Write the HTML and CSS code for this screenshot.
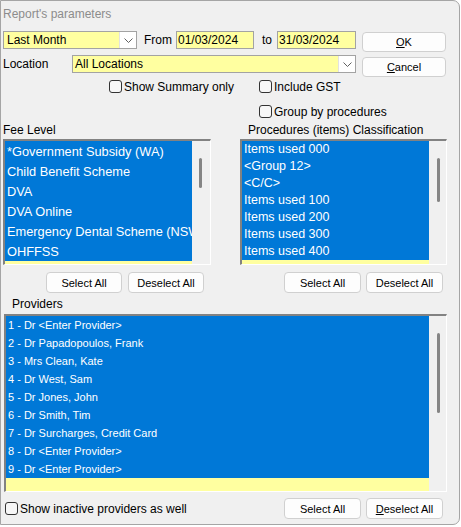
FILE: index.html
```html
<!DOCTYPE html>
<html>
<head>
<meta charset="utf-8">
<title>Report's parameters</title>
<link rel="stylesheet" href="styles.css">
</head>
<body>
<div class="window">
  <div class="title">Report's parameters</div>

  <div class="top">
    <div class="top-fields">
      <div class="field-row">
        <div class="combo combo-period">
          <span class="combo-text">Last Month</span>
          <span class="combo-btn"><svg width="9" height="5" viewBox="0 0 9 5"><polyline points="0.5,0.5 4.5,4.5 8.5,0.5" fill="none" stroke="#606060" stroke-width="1"/></svg></span>
        </div>
        <span class="lbl lbl-from">From</span>
        <div class="input date">01/03/2024</div>
        <span class="lbl lbl-to">to</span>
        <div class="input date date2">31/03/2024</div>
      </div>
      <div class="field-row">
        <span class="lbl lbl-loc">Location</span>
        <div class="combo combo-loc">
          <span class="combo-text">All Locations</span>
          <span class="combo-btn"><svg width="9" height="5" viewBox="0 0 9 5"><polyline points="0.5,0.5 4.5,4.5 8.5,0.5" fill="none" stroke="#606060" stroke-width="1"/></svg></span>
        </div>
      </div>
    </div>
    <div class="top-buttons">
      <button class="btn"><u>O</u>K</button>
      <button class="btn"><u>C</u>ancel</button>
    </div>
  </div>

  <div class="checks">
    <label class="check c-summary"><span class="box"></span>Show Summary only</label>
    <label class="check c-gst"><span class="box"></span>Include GST</label>
    <label class="check c-group"><span class="box"></span>Group by procedures</label>
  </div>

  <div class="lists">
    <div class="col fee">
      <div class="col-label">Fee Level</div>
      <div class="listbox">
        <div class="items">
          <div class="item">*Government Subsidy (WA)</div>
          <div class="item">Child Benefit Scheme</div>
          <div class="item">DVA</div>
          <div class="item">DVA Online</div>
          <div class="item">Emergency Dental Scheme (NSW)</div>
          <div class="item">OHFFSS</div>
        </div>
        <div class="scroll"><div class="thumb"></div></div>
      </div>
      <div class="btn-row">
        <button class="btn">Select All</button>
        <button class="btn">Deselect All</button>
      </div>
    </div>
    <div class="col proc">
      <div class="col-label">Procedures (items) Classification</div>
      <div class="listbox">
        <div class="items">
          <div class="item">Items used 000</div>
          <div class="item">&lt;Group 12&gt;</div>
          <div class="item">&lt;C/C&gt;</div>
          <div class="item">Items used 100</div>
          <div class="item">Items used 200</div>
          <div class="item">Items used 300</div>
          <div class="item">Items used 400</div>
        </div>
        <div class="scroll"><div class="thumb"></div></div>
      </div>
      <div class="btn-row">
        <button class="btn">Select All</button>
        <button class="btn">Deselect All</button>
      </div>
    </div>
  </div>

  <div class="prov">
    <div class="prov-label">Providers</div>
    <div class="listbox prov-list">
      <div class="items">
        <div class="item">1 - Dr &lt;Enter Provider&gt;</div>
        <div class="item">2 - Dr Papadopoulos, Frank</div>
        <div class="item">3 - Mrs Clean, Kate</div>
        <div class="item">4 - Dr West, Sam</div>
        <div class="item">5 - Dr Jones, John</div>
        <div class="item">6 - Dr Smith, Tim</div>
        <div class="item">7 - Dr Surcharges, Credit Card</div>
        <div class="item">8 - Dr &lt;Enter Provider&gt;</div>
        <div class="item">9 - Dr &lt;Enter Provider&gt;</div>
      </div>
      <div class="scroll"><div class="thumb"></div></div>
    </div>
  </div>

  <div class="bottom">
    <label class="check c-inactive"><span class="box"></span>Show inactive providers as well</label>
    <div class="bottom-buttons">
      <button class="btn">Select All</button>
      <button class="btn"><u>D</u>eselect All</button>
    </div>
  </div>
</div>
</body>
</html>
```

FILE: styles.css
```css
* { box-sizing: border-box; }

html, body {
  margin: 0;
  background: #ffffff;
}

body {
  font-family: "Liberation Sans", Arial, sans-serif;
  font-size: 12px;
  color: #000;
}

.window {
  width: 460px;
  height: 525px;
  background: #f0f0f0;
  border: 1px solid #a5a5a5;
  border-radius: 0 7px 7px 0;
  overflow: hidden;
}

.title {
  height: 30px;
  line-height: 26px;
  padding-left: 2px;
  color: #8c8c8c;
}

/* top area */
.top { display: flex; }

.top-fields {
  display: flex;
  flex-direction: column;
  gap: 6px;
}

.field-row {
  display: flex;
  align-items: center;
  height: 18px;
}

.combo {
  display: flex;
  height: 18px;
  border: 1px solid #a3a3a3;
  background: #ffffa0;
}

.combo-period { margin-left: 2px; width: 134px; }
.combo-loc { width: 284px; }

.combo-text {
  flex: 1;
  padding-left: 3px;
  line-height: 16px;
  white-space: nowrap;
  overflow: hidden;
}

.combo-loc .combo-text { padding-left: 2px; }

.combo-btn {
  width: 17px;
  flex: none;
  background: #ffffff;
  border-left: 1px solid #e2e2e2;
  display: flex;
  align-items: center;
  justify-content: center;
}

.combo-btn svg { display: block; }

.lbl { white-space: nowrap; }
.lbl-from { margin-left: 7px; width: 32px; }
.lbl-to { margin-left: 8px; width: 15px; }
.lbl-loc { margin-left: 2px; width: 69px; }

.input {
  height: 18px;
  border: 1px solid #a3a3a3;
  background: #ffffa0;
  line-height: 16px;
  padding-left: 1px;
}

.date { width: 78px; }
.date2 { width: 79px; }

.top-buttons {
  margin-left: 6px;
  width: 84px;
  padding-top: 1px;
  display: flex;
  flex-direction: column;
  gap: 5px;
}

.btn {
  height: 20px;
  padding: 0;
  background: #fdfdfd;
  border: 1px solid #d0d0d0;
  border-radius: 4px;
  font: 11px "Liberation Sans", Arial, sans-serif;
  color: #000;
  display: flex;
  align-items: center;
  justify-content: center;
}

/* checkboxes */
.checks {
  display: grid;
  grid-template-columns: 108px 150px auto;
  grid-template-rows: 13px 13px;
  row-gap: 12px;
  margin-top: 3px;
}

.check {
  display: flex;
  align-items: center;
  gap: 2px;
  height: 13px;
  white-space: nowrap;
}

.box {
  width: 13px;
  height: 13px;
  flex: none;
  border: 1px solid #333;
  border-radius: 3px;
  background: #f7f7f7;
}

.c-summary { grid-column: 2; grid-row: 1; }
.c-gst { grid-column: 3; grid-row: 1; }
.c-group { grid-column: 3; grid-row: 2; }

/* lists */
.lists {
  display: grid;
  grid-template-columns: 208px 207px;
  column-gap: 29px;
  margin: 3px 0 0 2px;
}

.col-label {
  height: 18px;
  line-height: 18px;
  white-space: nowrap;
}

.proc .col-label { padding-left: 8px; }

.listbox {
  display: flex;
  height: 126px;
  border-style: solid;
  border-width: 2px 1px 1px 2px;
  border-color: #828282 #ffffff #ffffff #828282;
}

.items {
  flex: 1;
  min-width: 0;
  background: #ffffa0;
  overflow: hidden;
  color: #ffffff;
}

.item {
  background: #0078d7;
  padding-left: 2px;
  white-space: nowrap;
  overflow: hidden;
}

.fee .item { height: 20px; line-height: 21px; font-size: 12.8px; }
.proc .item { height: 17px; line-height: 17px; font-size: 12.5px; }

.scroll {
  width: 17px;
  flex: none;
  background: #f0f0f0;
}

.fee .scroll { width: 18px; }

.thumb {
  width: 3px;
  background: #858585;
  border-radius: 2px;
  margin: 17px 0 0 8px;
}

.fee .thumb { height: 30px; margin-left: 7px; }
.proc .thumb { height: 44px; }

.btn-row {
  display: flex;
  justify-content: flex-end;
  margin-top: 7px;
}

.btn-row .btn { height: 21px; }

.fee .btn-row { gap: 6px; padding-right: 7px; }
.fee .btn-row .btn { width: 76px; }
.proc .btn-row { gap: 5px; padding-right: 4px; }
.proc .btn-row .btn { width: 77px; }

/* providers */
.prov-label {
  margin: 2px 0 0 11px;
  height: 19px;
  line-height: 19px;
}

.prov-list {
  margin-left: 3px;
  width: 443px;
  height: 178px;
}

.prov .item { height: 18px; line-height: 18px; font-size: 11px; }
.prov .thumb { height: 80px; }

/* bottom */
.bottom {
  display: flex;
  align-items: center;
  height: 21px;
  margin-top: 6px;
  padding-right: 16px;
}

.c-inactive { margin-left: 4px; }

.bottom-buttons {
  margin-left: auto;
  display: flex;
  gap: 5px;
}

.bottom-buttons .btn { width: 77px; height: 21px; }
```
